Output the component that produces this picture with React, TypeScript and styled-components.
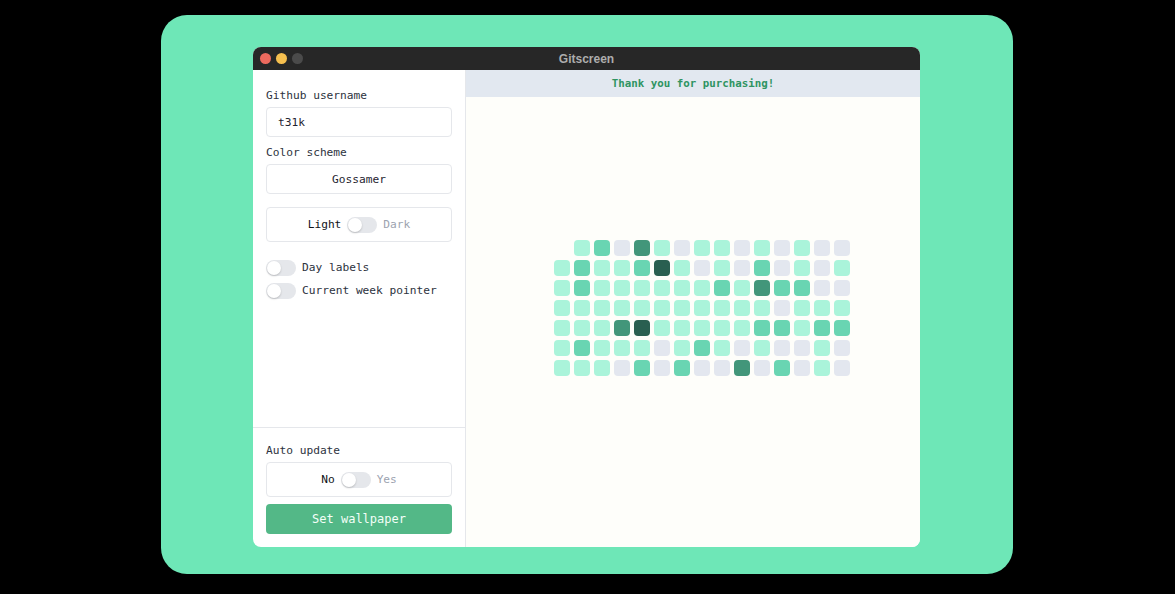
import React from 'react'
import styled, { createGlobalStyle } from 'styled-components'

const Global = createGlobalStyle`
  html, body { margin: 0; padding: 0; background: #000; }
  body { width: 1175px; height: 594px; overflow: hidden; }
`

const mono = `"DejaVu Sans Mono", "Liberation Mono", monospace`

const Card = styled.div`
  width: 852px;
  height: 559px;
  margin: 15px 0 0 161px;
  background: #6ee7b7;
  border-radius: 26px;
  display: flex;
  padding: 32px 0 0 92px;
  box-sizing: border-box;
`

const Window = styled.div`
  width: 667px;
  height: 500px;
  border-radius: 8px;
  overflow: hidden;
  display: flex;
  flex-direction: column;
  background: #fff;
`

const TitleBar = styled.div`
  height: 23px;
  background: #272727;
  display: grid;
  grid-template-columns: 1fr auto 1fr;
  align-items: center;
  padding: 0 7px;
`

const Lights = styled.div`
  display: flex;
  gap: 5px;
`

const Light = styled.span<{ $c: string }>`
  width: 11px;
  height: 11px;
  border-radius: 50%;
  background: ${p => p.$c};
`

const Title = styled.div`
  font-family: "Liberation Sans", Arial, sans-serif;
  font-weight: 700;
  font-size: 12px;
  color: #adadad;
`

const Body = styled.div`
  flex: 1;
  display: flex;
  min-height: 0;
`

const Sidebar = styled.div`
  width: 212px;
  border-right: 1px solid #e5e7eb;
  display: flex;
  flex-direction: column;
  font-family: ${mono};
  font-size: 11.2px;
  color: #2d3340;
`

const Section = styled.div<{ $bottom?: boolean }>`
  padding: ${p => (p.$bottom ? '13px 13px 13px' : '16px 13px 0')};
  border-top: ${p => (p.$bottom ? '1px solid #e5e7eb' : 'none')};
  margin-top: ${p => (p.$bottom ? 'auto' : '0')};
  display: flex;
  flex-direction: column;
`

const Label = styled.div`
  height: 18px;
  line-height: 20px;
  margin-bottom: 3px;
`

const Field = styled.div<{ $center?: boolean; $tall?: boolean; $gap?: number }>`
  height: ${p => (p.$tall ? 33 : 28)}px;
  border: 1px solid #e5e7eb;
  border-radius: 4px;
  display: flex;
  align-items: center;
  justify-content: ${p => (p.$center ? 'center' : 'flex-start')};
  padding: 0 11px;
  gap: 6px;
  color: #1f2430;
  margin-bottom: ${p => p.$gap ?? 6}px;
`

const Switch = styled.span`
  width: 30px;
  height: 16px;
  border-radius: 8px;
  background: #e5e7eb;
  position: relative;
  flex-shrink: 0;
  &::after {
    content: '';
    position: absolute;
    left: 1px;
    top: 1px;
    width: 14px;
    height: 14px;
    border-radius: 50%;
    background: #fff;
    box-shadow: 0 1px 2px rgba(0, 0, 0, 0.2);
  }
`

const Muted = styled.span`
  color: #9ca3af;
`

const Strong = styled.span`
  color: #111318;
`

const Options = styled.div`
  display: flex;
  flex-direction: column;
  gap: 6px;
  margin-top: 11px;
`

const OptionRow = styled.div`
  display: flex;
  align-items: center;
  gap: 6px;
  height: 17px;
`

const Button = styled.button`
  height: 30px;
  margin-top: 1px;
  border: none;
  border-radius: 4px;
  background: #53b887;
  color: #f3fff8;
  font-family: ${mono};
  font-size: 12px;
  cursor: pointer;
`

const Main = styled.div`
  flex: 1;
  background: #fefefa;
  display: flex;
  flex-direction: column;
`

const Banner = styled.div`
  height: 27px;
  background: #e2e8f0;
  display: flex;
  align-items: center;
  justify-content: center;
  font-family: ${mono};
  font-weight: 700;
  font-size: 10.8px;
  color: #2f9462;
`

const Preview = styled.div`
  flex: 1;
  padding: 143px 0 0 88px;
`

const Graph = styled.div`
  display: grid;
  grid-template-columns: repeat(15, 16px);
  grid-auto-rows: 16px;
  gap: 4px;
`

const palette: Record<string, string> = {
  L: '#aaf4da',
  M: '#69d5b2',
  D: '#42967a',
  X: '#295f50',
  G: '#e3e7ef',
  _: 'transparent',
}

const Cell = styled.span<{ $k: string }>`
  border-radius: 4px;
  background: ${p => palette[p.$k]};
`

const rows = [
  '_LMGDLGLLGLGLGG',
  'LMLLMXLGLGMGLGL',
  'LMLLLLLLMLDMMGG',
  'LLLLLLLLLLLGLLL',
  'LLLDXLLLLLMMLMM',
  'LMLLLGLMLGLGGLG',
  'LLLGMGMGGDGMGLG',
]

export default function App() {
  return (
    <>
      <Global />
      <Card>
        <Window>
          <TitleBar>
            <Lights>
              <Light $c="#ed6a5e" />
              <Light $c="#f5bf4f" />
              <Light $c="#4b4b4b" />
            </Lights>
            <Title>Gitscreen</Title>
            <span />
          </TitleBar>
          <Body>
            <Sidebar>
              <Section>
                <Label>Github username</Label>
                <Field>t31k</Field>
                <Label>Color scheme</Label>
                <Field $center $gap={13}>Gossamer</Field>
                <Field $center $tall>
                  <Strong>Light</Strong>
                  <Switch />
                  <Muted>Dark</Muted>
                </Field>
                <Options>
                  <OptionRow>
                    <Switch />
                    Day labels
                  </OptionRow>
                  <OptionRow>
                    <Switch />
                    Current week pointer
                  </OptionRow>
                </Options>
              </Section>
              <Section $bottom>
                <Label>Auto update</Label>
                <Field $center $tall>
                  <Strong>No</Strong>
                  <Switch />
                  <Muted>Yes</Muted>
                </Field>
                <Button>Set wallpaper</Button>
              </Section>
            </Sidebar>
            <Main>
              <Banner>Thank you for purchasing!</Banner>
              <Preview>
                <Graph>
                  {rows.flatMap((r, i) =>
                    r.split('').map((k, j) => <Cell key={`${i}-${j}`} $k={k} />)
                  )}
                </Graph>
              </Preview>
            </Main>
          </Body>
        </Window>
      </Card>
    </>
  )
}
